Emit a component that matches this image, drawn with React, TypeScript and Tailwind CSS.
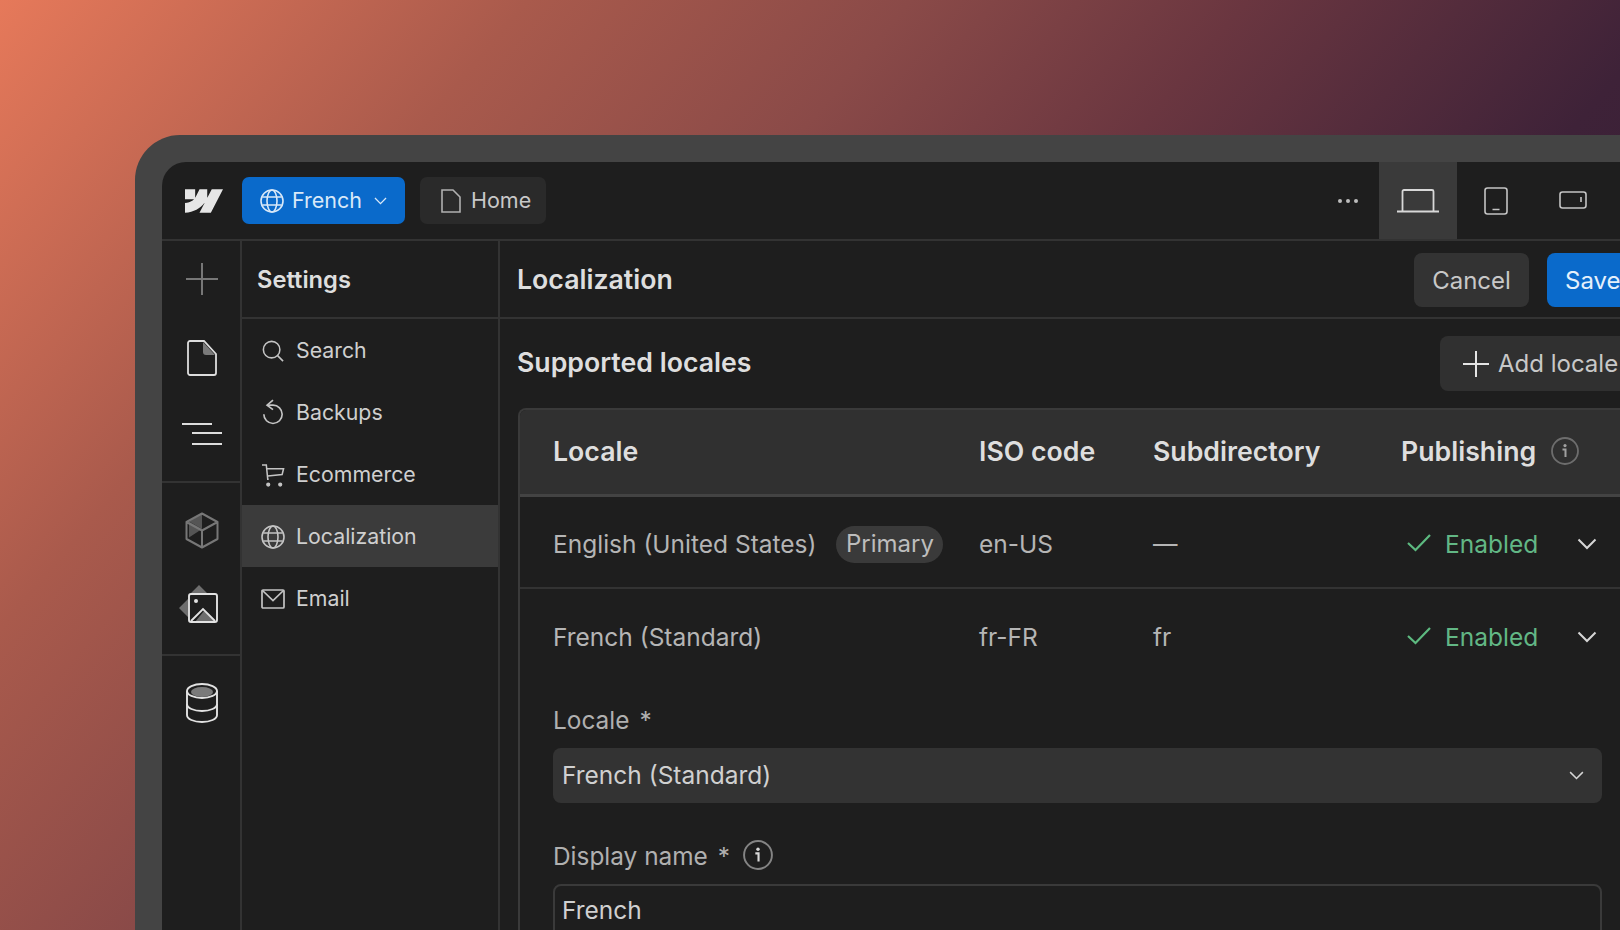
import { SiWebflow } from "react-icons/si";

const Globe = ({ c = "" }: { c?: string }) => (
  <svg viewBox="0 0 24 24" fill="none" stroke="currentColor" strokeWidth="1.6" className={c}>
    <circle cx="12" cy="12" r="11" />
    <ellipse cx="12" cy="12" rx="5" ry="11" />
    <path d="M2.2 8h19.6M2.2 16h19.6" />
  </svg>
);

const Chevron = ({ c = "" }: { c?: string }) => (
  <svg viewBox="0 0 20 12" fill="none" stroke="currentColor" strokeWidth="2" className={c}>
    <path d="M1.5 1.5 10 10l8.5-8.5" />
  </svg>
);

const Check = () => (
  <svg viewBox="0 0 24 18" fill="none" stroke="#5dba80" strokeWidth="2.2" className="w-[24px] h-[18px] -translate-y-[1px]">
    <path d="M1 9 8.500 16 23 1" />
  </svg>
);

const Info = ({ c = "" }: { c?: string }) => (
  <svg viewBox="0 0 28 28" fill="none" className={c}>
    <circle cx="14" cy="14" r="13" stroke="currentColor" strokeOpacity="0.55" strokeWidth="1.8" />
    <circle cx="14" cy="8.6" r="1.6" fill="currentColor" />
    <path d="M11.5 12.5H14.5V20" stroke="currentColor" strokeWidth="2" fill="none" />
  </svg>
);

const Row = ({ icon, label, active }: { icon: React.ReactNode; label: string; active?: boolean }) => (
  <div className={`h-[62px] pt-[2px] flex items-center pl-[19px] ${active ? "bg-[#3b3b3b]" : ""}`}>
    <span className="w-[24px] h-[24px] flex items-center justify-center text-[#c4c4c4]">{icon}</span>
    <span className="ml-[11px] text-[21.3px] text-[#cfcfcf]">{label}</span>
  </div>
);

const RailItem = ({ children }: { children: React.ReactNode }) => (
  <div className="h-[78px] flex items-center justify-center">{children}</div>
);

const TableRow = ({ name, pill, iso, sub }: { name: string; pill?: boolean; iso: string; sub: string }) => (
  <>
    <div className="flex items-center text-[24.5px] text-[#b5b5b5]">
      <span>{name}</span>
      {pill && <span className="ml-[20px] h-[37px] px-[9.5px] flex items-center rounded-full bg-[#3a3a3a] text-[24px] text-[#bdbdbd]">Primary</span>}
    </div>
    <div className="text-[24.5px] text-[#b5b5b5]">{iso}</div>
    <div className="text-[24.5px] text-[#b5b5b5]">{sub}</div>
    <div className="flex items-center pl-[6px]">
      <Check />
      <span className="ml-[14px] text-[24.5px] text-[#62b785]">Enabled</span>
      <Chevron c="ml-[39px] w-[20px] h-[12px] text-[#d6d6d6]" />
    </div>
  </>
);

export default function App() {
  return (
    <div className="w-[1620px] h-[930px] overflow-hidden pl-[135px] pt-[135px] font-[Inter,sans-serif] bg-[linear-gradient(130deg,#e6795a_0%,#a95a4c_22%,#8a4a48_38%,#6a3640_52%,#3e2238_70%,#2a1a30_100%)]">
      <div className="w-[1520px] h-[795px] bg-[#444444] rounded-tl-[45px] pl-[27px] pt-[27px]">
        <div className="w-[1493px] h-[768px] bg-[#1e1e1e] rounded-tl-[24px] overflow-hidden flex flex-col">
          {/* Top bar */}
          <div className="h-[79px] shrink-0 flex items-center border-b-2 border-[#333333]">
            <div className="w-[80px] pl-[4px] flex justify-center">
              <SiWebflow className="w-[38px] h-[38px] text-[#e6e6e6]" />
            </div>
            <div className="h-[47px] w-[163px] rounded-[7px] bg-[#0a6acb] flex items-center pl-[18px] text-[#d8e8f8]">
              <Globe c="w-[24px] h-[24px]" />
              <span className="ml-[8px] text-[21.5px]">French</span>
              <Chevron c="ml-[12px] w-[13px] h-[8px]" />
            </div>
            <div className="ml-[15px] h-[47px] w-[126px] rounded-[7px] bg-[#2a2a2a] flex items-center pl-[21px] text-[#c8c8c8]">
              <svg viewBox="0 0 20 24" fill="none" stroke="currentColor" strokeWidth="1.6" className="w-[20px] h-[24px] text-[#b0b0b0]">
                <path d="M1 1h11l7 7v15H1z" />
              </svg>
              <span className="ml-[10px] text-[21.5px]">Home</span>
            </div>
            <div className="ml-auto mr-[21px] flex gap-[4px]">
              <span className="w-[4px] h-[4px] rounded-full bg-[#bdbdbd]" />
              <span className="w-[4px] h-[4px] rounded-full bg-[#bdbdbd]" />
              <span className="w-[4px] h-[4px] rounded-full bg-[#bdbdbd]" />
            </div>
            <div className="w-[78px] h-full bg-[#3a3a3a] flex items-center justify-center">
              <svg viewBox="0 0 44 24" fill="none" stroke="#d8d8d8" strokeWidth="1.8" className="w-[44px] h-[24px]">
                <path d="M6.5 22V2.5a1.5 1.5 0 0 1 1.5-1.5h28a1.5 1.5 0 0 1 1.5 1.5V22M1 22.5h42" />
              </svg>
            </div>
            <div className="w-[78px] h-full flex items-center justify-center">
              <svg viewBox="0 0 24 28" fill="none" stroke="#c4c4c4" strokeWidth="1.6" className="w-[24px] h-[28px]">
                <rect x="1" y="1" width="22" height="26" rx="2.5" />
                <path d="M8.5 22.5h7" />
              </svg>
            </div>
            <div className="w-[78px] h-full flex items-center justify-center">
              <svg viewBox="0 0 28 18" fill="none" stroke="#c4c4c4" strokeWidth="1.6" className="w-[28px] h-[18px] -translate-x-[1px] -translate-y-[1px]">
                <rect x="1" y="1" width="26" height="16" rx="2.5" />
                <path d="M22 6v5" />
              </svg>
            </div>
            <div className="w-[42px]" />
          </div>

          <div className="flex flex-1 min-h-0">
            {/* Rail */}
            <div className="w-[80px] shrink-0 pl-[2px] border-r-2 border-[#333333] flex flex-col">
              <div className="-ml-[2px] pl-[2px] pb-[6px] border-b-2 border-[#333333]">
                <RailItem>
                  <svg viewBox="0 0 32 32" fill="none" stroke="#777777" strokeWidth="2" className="w-[32px] h-[32px] -translate-y-[1px]">
                    <path d="M16 0v32M0 16h32" />
                  </svg>
                </RailItem>
                <RailItem>
                  <svg viewBox="0 0 30 36" fill="none" className="w-[30px] h-[36px]">
                    <path d="M16 2l12 13h-9a3 3 0 0 1-3-3z" fill="#7a7a7a" />
                    <path d="M3 1h14l12 13v19a2 2 0 0 1-2 2H3a2 2 0 0 1-2-2V3a2 2 0 0 1 2-2z" stroke="#dddddd" strokeWidth="1.8" />
                  </svg>
                </RailItem>
                <RailItem>
                  <svg viewBox="0 0 40 24" fill="none" stroke="#dddddd" strokeWidth="2" className="w-[40px] h-[24px] -translate-y-[2px]">
                    <path d="M0 2h30M10 11h30M10 22h30" />
                  </svg>
                </RailItem>
              </div>
              <div className="-ml-[2px] pl-[2px] pt-[8px] pb-[7px] border-b-2 border-[#333333]">
                <RailItem>
                  <svg viewBox="0 0 34 37" fill="none" className="w-[34px] h-[37px]">
                    <path d="M17 2 4 9.5l13 7.5z" fill="#555555" />
                    <path d="M4 9.5v16l13-8.5z" fill="#555555" />
                    <path d="M17 1.5 32.5 10v17L17 35.5 1.5 27V10zM1.5 10 17 18.5 32.5 10M17 18.5v17" stroke="#777777" strokeWidth="2" strokeLinejoin="round" />
                  </svg>
                </RailItem>
                <RailItem>
                  <svg viewBox="0 0 40 42" fill="none" className="w-[40px] h-[42px] -translate-x-[3px] -translate-y-[2px]">
                    <path d="M20 0l9 9H11zM0 23l9-9v18z" fill="#6e6e6e" />
                    <rect x="10" y="9" width="28" height="28" rx="2" fill="#1e1e1e" />
                    <path d="M16 37l9-11 11 11" fill="#6e6e6e" />
                    <rect x="10" y="9" width="28" height="28" rx="2" stroke="#e2e2e2" strokeWidth="1.9" />
                    <path d="M12 36l12-12 12 12" stroke="#e2e2e2" strokeWidth="1.9" />
                    <circle cx="17" cy="16" r="2" fill="#e2e2e2" />
                  </svg>
                </RailItem>
              </div>
              <div className="py-[8px]">
                <RailItem>
                  <svg viewBox="0 0 32 40" fill="none" className="w-[32px] h-[40px]">
                    <path d="M1 8v24c0 4 6.7 7 15 7s15-3 15-7V8" stroke="#e2e2e2" strokeWidth="1.9" />
                    <ellipse cx="16" cy="8" rx="15" ry="7" stroke="#e2e2e2" strokeWidth="1.9" />
                    <ellipse cx="16" cy="9" rx="11" ry="5" fill="#7a7a7a" />
                    <path d="M1 21c0 4 6.700 7 15 7s15-3 15-7" stroke="#e2e2e2" strokeWidth="1.9" />
                  </svg>
                </RailItem>
              </div>
            </div>

            {/* Settings panel */}
            <div className="w-[258px] shrink-0 border-r-2 border-[#333333]">
              <div className="h-[78px] pt-[2px] flex items-center pl-[15px] border-b-2 border-[#333333] text-[23.7px] font-semibold text-[#dedede]">Settings</div>
              <Row
                label="Search"
                icon={
                  <svg viewBox="0 0 24 24" fill="none" stroke="currentColor" strokeWidth="1.7" className="w-[22px] h-[22px]">
                    <circle cx="10.500" cy="10.500" r="9" />
                    <path d="m17 17 6 6" />
                  </svg>
                }
              />
              <Row
                label="Backups"
                icon={
                  <svg viewBox="0 0 24 28" fill="none" stroke="currentColor" strokeWidth="1.8" className="w-[22px] h-[26px] -translate-y-[1px]">
                    <path d="M12 1 5.500 6.500 12 11.500" />
                    <path d="M6 6.500H12A10 10 0 1 1 2 16.500" />
                  </svg>
                }
              />
              <Row
                label="Ecommerce"
                icon={
                  <svg viewBox="0 0 24 24" fill="none" stroke="currentColor" strokeWidth="1.6" className="w-[23px] h-[23px]">
                    <path d="M0 1h4.500l1.500 15h1M5.200 5h17.300l-1.500 6-15 1.500" />
                    <circle cx="6.500" cy="21.500" r="1.400" fill="currentColor" />
                    <circle cx="19" cy="21.500" r="1.400" fill="currentColor" />
                  </svg>
                }
              />
              <Row label="Localization" active icon={<Globe c="w-[24px] h-[24px]" />} />
              <Row
                label="Email"
                icon={
                  <svg viewBox="0 0 24 20" fill="none" stroke="currentColor" strokeWidth="1.7" className="w-[24px] h-[20px]">
                    <rect x="1" y="1" width="22" height="18" rx="1" />
                    <path d="m1.500 1.500 10.500 10 10.500-10" />
                  </svg>
                }
              />
            </div>

            {/* Main */}
            <div className="flex-1 min-w-0 px-[18px]">
              <div className="h-[78px] pt-[2px] -mx-[18px] px-[18px] flex items-center justify-between border-b-2 border-[#333333]">
                <span className="-ml-[1px] mb-[2px] text-[26.7px] font-semibold text-[#dedede]">Localization</span>
                <div className="flex gap-[18px]">
                  <div className="h-[54px] pt-[1px] w-[115px] rounded-[8px] bg-[#333333] flex items-center justify-center text-[24px] text-[#c8c8c8]">Cancel</div>
                  <div className="h-[54px] pt-[1px] w-[90px] rounded-[8px] bg-[#0a6acb] flex items-center pl-[18px] text-[24px] text-[#e4f0fb]">Save</div>
                </div>
              </div>
              <div className="h-[89px] flex items-center justify-between">
                <span className="-ml-[1px] mb-[2px] text-[26.7px] font-semibold text-[#dedede]">Supported locales</span>
                <div className="h-[55px] w-[197px] rounded-[8px] bg-[#303030] flex items-center pl-[23px] text-[24px] text-[#c8c8c8]">
                  <svg viewBox="0 0 26 26" fill="none" stroke="#e4e4e4" strokeWidth="2" className="w-[26px] h-[26px]">
                    <path d="M13 0v26M0 13h26" />
                  </svg>
                  <span className="ml-[9px]">Add locale</span>
                </div>
              </div>

              <div className="rounded-t-[8px] border-x-2 border-t-2 border-[#3a3a3a] pb-[40px]">
                <div className="h-[87px] pb-[2px] grid grid-cols-[426px_174px_248px_1fr] items-center pl-[33px] bg-[#303030] border-b-[3px] border-[#434343] rounded-t-[6px] text-[26.7px] font-semibold text-[#dedede]">
                  <span>Locale</span>
                  <span>ISO code</span>
                  <span>Subdirectory</span>
                  <div className="flex items-center">
                    <span>Publishing</span>
                    <Info c="ml-[15px] w-[28px] h-[28px] text-[#a0a0a0]" />
                  </div>
                </div>
                <div className="h-[92px] pt-[4px] grid grid-cols-[426px_174px_248px_1fr] items-center pl-[33px] border-b-2 border-[#333333]">
                  <TableRow name="English (United States)" pill iso="en-US" sub="—" />
                </div>
                <div className="h-[92px] pt-[4px] grid grid-cols-[426px_174px_248px_1fr] items-center pl-[33px]">
                  <TableRow name="French (Standard)" iso="fr-FR" sub="fr" />
                </div>
                <div className="px-[33px]">
                  <div className="text-[24.4px] text-[#b0b0b0] h-[36px] flex items-center mt-[21px]">Locale<span className="ml-[10px]">*</span></div>
                  <div className="mt-[10px] h-[55px] rounded-[8px] bg-[#333333] flex items-center justify-between pl-[9px] pr-[18px] text-[24.5px] text-[#d0d0d0]">
                    <span>French (Standard)</span>
                    <Chevron c="w-[15px] h-[9px] text-[#d6d6d6]" />
                  </div>
                  <div className="mt-[35px] text-[24.4px] text-[#b0b0b0] h-[36px] flex items-center">
                    Display name<span className="ml-[10px]">*</span>
                    <Info c="ml-[13px] w-[30px] h-[30px] text-[#d8d8d8] -translate-y-[1px]" />
                  </div>
                  <div className="mt-[10px] h-[60px] pb-[8px] rounded-t-[8px] border-2 border-[#3a3a3a] flex items-center pl-[7px] text-[24.5px] text-[#d0d0d0]">French</div>
                </div>
              </div>
            </div>
          </div>
        </div>
      </div>
    </div>
  );
}
